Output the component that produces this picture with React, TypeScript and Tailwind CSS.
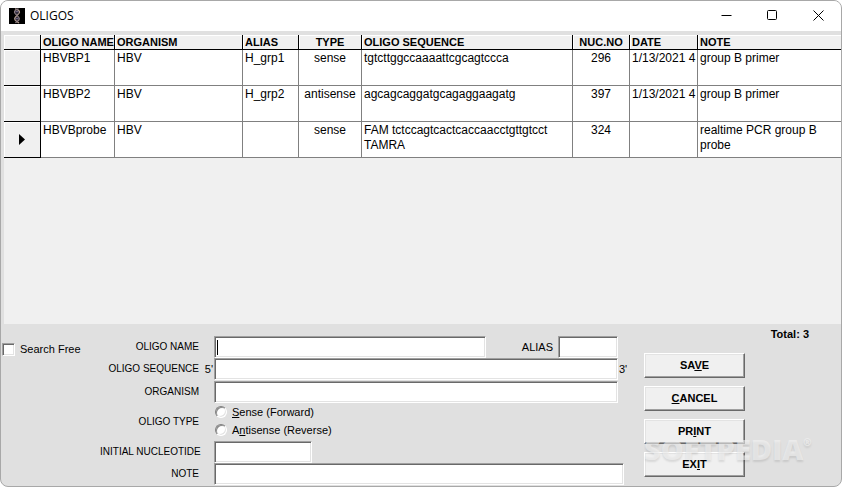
import type { ReactNode } from 'react';

interface Oligo {
    name: string;
    organism: string;
    alias: string;
    type: string;
    sequence: string;
    nucNo: string;
    date: string;
    note: string;
}

const oligos: Oligo[] = [
    { name: 'HBVBP1', organism: 'HBV', alias: 'H_grp1', type: 'sense', sequence: 'tgtcttggccaaaattcgcagtccca', nucNo: '296', date: '1/13/2021 4', note: 'group B primer' },
    { name: 'HBVBP2', organism: 'HBV', alias: 'H_grp2', type: 'antisense', sequence: 'agcagcaggatgcagaggaagatg', nucNo: '397', date: '1/13/2021 4', note: 'group B primer' },
    { name: 'HBVBprobe', organism: 'HBV', alias: '', type: 'sense', sequence: 'FAM tctccagtcactcaccaacctgttgtcct TAMRA', nucNo: '324', date: '', note: 'realtime PCR group B probe' },
];

const selectedRow = 2;

const sunken = 'h-[22px] min-w-0 border border-t-[#a0a0a0] border-l-[#a0a0a0] border-r-white border-b-white bg-white px-1 text-xs shadow-[inset_1px_1px_0_#696969,inset_-1px_-1px_0_#e3e3e3] outline-none';

const DnaIcon = () => (
    <svg width="16" height="16" viewBox="0 0 16 16" className="shrink-0" aria-hidden="true">
        <rect width="16" height="16" fill="#000" />
        <ellipse cx="8" cy="4.5" rx="2" ry="2.5" fill="#35303f" />
        <ellipse cx="8" cy="10.800" rx="2" ry="2.300" fill="#35303f" />
        <path d="M6 0.800C8 1.200 10.800 2.500 10.500 4.500C10.300 6.500 5.600 8.300 5.600 10.800C5.600 13 8.500 13.500 10 15" fill="none" stroke="#b39c90" strokeWidth="1.200" />
        <path d="M9.500 0.800C8 1.200 5.200 2.500 5.500 4.500C5.700 6.500 10.400 8.300 10.400 10.800C10.400 13 7.500 13.500 6.500 15" fill="none" stroke="#8a7b80" strokeWidth="1.200" />
        <path d="M6.500 3.500H9.500M6.500 10.500H9.500" stroke="#6d6480" strokeWidth="1" />
    </svg>
);

const TitleBar = () => (
    <header className="flex h-[30px] shrink-0 items-center bg-white pl-2">
        <DnaIcon />
        <h1 className="flex-1 pl-[5px] font-['Open_Sans',sans-serif] text-xs">OLIGOS</h1>
        <button type="button" aria-label="Minimize" className="flex h-full w-[46px] items-center justify-center pb-0.5">
            <svg width="11" height="11" viewBox="0 0 11 11" stroke="#000"><path d="M0.500 5.500H10.500" /></svg>
        </button>
        <button type="button" aria-label="Maximize" className="flex h-full w-[46px] items-center justify-center pb-0.5">
            <svg width="11" height="11" viewBox="0 0 11 11" fill="none" stroke="#000"><rect x="0.500" y="0.500" width="9" height="9" rx="1" /></svg>
        </button>
        <button type="button" aria-label="Close" className="flex h-full w-[46px] items-center justify-center pb-0.5">
            <svg width="11" height="11" viewBox="0 0 11 11" stroke="#000"><path d="M0.500 0.500L10.500 10.500M10.500 0.500L0.500 10.500" /></svg>
        </button>
    </header>
);

const Th = ({ children, className = '' }: { children?: ReactNode; className?: string }) => (
    <th className={`h-[15px] overflow-hidden border-b border-black bg-[#f0f0f0] px-0.5 py-0 text-[11px] leading-[14px] font-bold whitespace-nowrap shadow-[inset_1px_1px_0_#fff] ${className}`}>
        {children}
    </th>
);

const Td = ({ children, className = '' }: { children?: ReactNode; className?: string }) => (
    <td className={`h-9 overflow-hidden border-b border-[#808080] bg-white px-0.5 pt-px pb-0 align-top ${className}`}>{children}</td>
);

const OligoTable = () => (
    <table className="w-full table-fixed border-separate border-spacing-0 text-left text-xs leading-[15px]">
        <colgroup>
            <col className="w-[37px]" />
            <col className="w-[74px]" />
            <col className="w-[128px]" />
            <col className="w-[56px]" />
            <col className="w-[63px]" />
            <col className="w-[211px]" />
            <col className="w-[57px]" />
            <col className="w-[68px]" />
            <col />
        </colgroup>
        <thead>
            <tr>
                <Th className="border-r" />
                <Th className="border-r">OLIGO NAME</Th>
                <Th className="border-r">ORGANISM</Th>
                <Th className="border-r">ALIAS</Th>
                <Th className="border-r text-center">TYPE</Th>
                <Th className="border-r">OLIGO SEQUENCE</Th>
                <Th className="border-r text-center">NUC.NO</Th>
                <Th className="border-r">DATE</Th>
                <Th>NOTE</Th>
            </tr>
        </thead>
        <tbody>
            {oligos.map((oligo, i) => (
                <tr key={oligo.name}>
                    <td className="h-9 border-r border-b border-black bg-[#f0f0f0] p-0 align-middle shadow-[inset_1px_1px_0_#fff]">
                        {i === selectedRow && (
                            <svg width="6" height="11" viewBox="0 0 6 11" className="mx-auto"><path d="M0 0L6 5.500L0 11Z" /></svg>
                        )}
                    </td>
                    <Td className="border-r">{oligo.name}</Td>
                    <Td className="border-r">{oligo.organism}</Td>
                    <Td className="border-r">{oligo.alias}</Td>
                    <Td className="border-r text-center">{oligo.type}</Td>
                    <Td className="border-r">{oligo.sequence}</Td>
                    <Td className="border-r text-center">{oligo.nucNo}</Td>
                    <Td className="border-r whitespace-nowrap">{oligo.date}</Td>
                    <Td>{oligo.note}</Td>
                </tr>
            ))}
        </tbody>
    </table>
);

const FieldRow = ({ label, htmlFor, mark = '', children }: { label: string; htmlFor: string; mark?: string; children: ReactNode }) => (
    <div className="flex h-[22px] items-center">
        <label htmlFor={htmlFor} className="w-[100px] shrink-0 pr-px text-right text-[10px] whitespace-nowrap">{label}</label>
        <span className="w-3.5 shrink-0 pr-px text-right text-[11px]">{mark}</span>
        {children}
    </div>
);

const TypeOption = ({ children }: { children: ReactNode }) => (
    <label className="flex h-[18px] items-center gap-[5px]">
        <input
            type="radio"
            name="oligo-type"
            className="ml-px size-3 appearance-none rounded-full border border-t-[#808080] border-l-[#808080] border-r-white border-b-white bg-white shadow-[inset_1px_1px_0_#8c8c8c,inset_-1px_-1px_0_#e3e3e3] checked:bg-black"
        />
        <span>{children}</span>
    </label>
);

const ActionButton = ({ children }: { children: ReactNode }) => (
    <button
        type="button"
        className="h-[25px] w-[101px] border border-t-white border-l-white border-r-[#696969] border-b-[#696969] bg-[#f0f0f0] text-[11px] leading-none font-bold shadow-[inset_-1px_-1px_0_#a0a0a0,inset_1px_1px_0_#e3e3e3]"
    >
        {children}
    </button>
);

const OligoForm = () => (
    <form className="flex h-[162px] shrink-0 text-[11px] leading-[14px]">
        <div className="w-[99px] shrink-0 pt-[18px] pl-px">
            <label className="flex items-center gap-[5px] whitespace-nowrap">
                <input
                    type="checkbox"
                    className="size-[13px] appearance-none border border-t-[#a0a0a0] border-l-[#a0a0a0] border-r-white border-b-white bg-white shadow-[inset_1px_1px_0_#696969,inset_-1px_-1px_0_#e3e3e3] checked:bg-black"
                />
                Search Free
            </label>
        </div>

        <div className="min-w-0 flex-1 pt-3">
            <FieldRow label="OLIGO NAME" htmlFor="name">
                <div className="relative flex min-w-0 flex-1">
                    <input id="name" type="text" className={`${sunken} w-full`} />
                    {/* text caret */}
                    <span className="absolute top-1 left-[3px] h-[15px] w-px bg-black" />
                </div>
                <label htmlFor="alias" className="w-[72px] pr-[5px] text-right">ALIAS</label>
                <input id="alias" type="text" className={`${sunken} mr-3 w-[60px]`} />
            </FieldRow>
            <FieldRow label="OLIGO SEQUENCE" htmlFor="sequence" mark="5'">
                <input id="sequence" type="text" className={`${sunken} flex-1`} />
                <span className="w-3 pl-px">3'</span>
            </FieldRow>
            <div className="pt-px">
                <FieldRow label="ORGANISM" htmlFor="organism">
                    <input id="organism" type="text" className={`${sunken} mr-3 flex-1`} />
                </FieldRow>
            </div>
            <fieldset className="flex h-[38px]">
                <legend className="float-left w-[100px] pt-3 pr-px text-right text-[10px]">OLIGO TYPE</legend>
                <div className="pl-3.5">
                    <TypeOption><u>S</u>ense (Forward)</TypeOption>
                    <TypeOption>A<u>n</u>tisense (Reverse)</TypeOption>
                </div>
            </fieldset>
            <FieldRow label="INITIAL NUCLEOTIDE" htmlFor="nucleotide">
                <input id="nucleotide" type="text" className={`${sunken} w-[98px]`} />
            </FieldRow>
            <FieldRow label="NOTE" htmlFor="note">
                <input id="note" type="text" className={`${sunken} mr-1.5 flex-1`} />
            </FieldRow>
        </div>

        <div className="relative w-[211px] shrink-0 pl-3.5">
            <p className="pt-[3px] pr-8 text-right font-bold">Total: 3</p>
            <div className="flex flex-col items-start gap-2 pt-3">
                <ActionButton>SA<u>V</u>E</ActionButton>
                <ActionButton><u>C</u>ANCEL</ActionButton>
                <ActionButton>PR<u>I</u>NT</ActionButton>
                <ActionButton>EX<u>I</u>T</ActionButton>
            </div>
            <div className="pointer-events-none absolute bottom-5 left-3.5 flex items-start font-['Open_Sans',sans-serif] text-[29px] leading-[34px] font-extrabold text-[#f4f4f4]/60 [text-shadow:0_2px_2px_rgb(0_0_0/0.1)]">
                SOFTPEDIA<span className="text-[10px] leading-5">®</span>
            </div>
        </div>
    </form>
);

export default function App() {
    return (
        <main className="flex h-screen flex-col overflow-hidden rounded-lg border border-[#a8a8a8] bg-[#e0e0e0] font-['Liberation_Sans',Arial,sans-serif] text-black">
            <TitleBar />
            <section className="mt-1 ml-[3px] min-h-0 flex-1 overflow-hidden bg-[#f0f0f0]">
                <OligoTable />
            </section>
            <OligoForm />
        </main>
    );
}
